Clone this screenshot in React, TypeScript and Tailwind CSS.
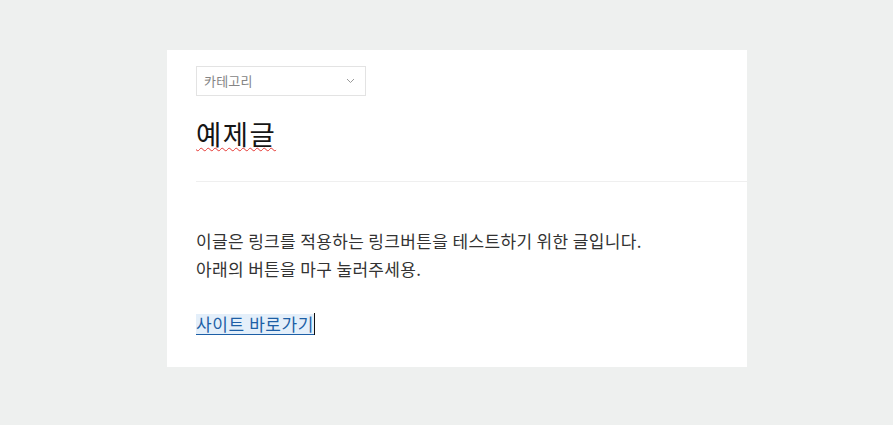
export default function App() {
  return (
    <div
      className="min-h-[425px] w-full bg-[#eef0ef] pt-[50px]"
      style={{ fontFamily: '"Noto Sans CJK KR", "Noto Sans", sans-serif' }}
    >
      <div className="ml-[167px] w-[580px] bg-white pb-[32px] pl-[29px]">
        <div className="pt-[16px]">
          <div className="flex h-[30px] w-[170px] items-center justify-between border border-[#e3e3e3] pl-[7px] pr-[10px] text-[13px] tracking-[0.2px] text-[#858585]">
            <span>카테고리</span>
            <svg width="9" height="6" viewBox="0 0 9 6" fill="none">
              <polyline points="1,1 4.5,4.5 8,1" stroke="#9a9a9a" strokeWidth="1" />
            </svg>
          </div>
        </div>

        <div className="border-b border-[#efefef] pb-[28px] pt-[17px]">
          <h1 className="text-[27.5px] leading-[40px] tracking-[1.4px] text-[#151515]">
            <span className="underline decoration-wavy decoration-[#e53935] decoration-1 underline-offset-[2px]">예제글</span>
          </h1>
        </div>

        <div className="pt-[45px] text-[17px] leading-[28px] tracking-[0.35px] text-[#333]">
          <p>이글은 링크를 적용하는 링크버튼을 테스트하기 위한 글입니다.</p>
          <p>아래의 버튼을 마구 눌러주세용.</p>
          <p>
            <br />
          </p>
          <p className="flex items-center pt-[2px]">
            <a className="inline-block h-[21px] bg-[#e4effa] leading-[20px] tracking-[0.6px] text-[#1d5fa6] underline decoration-[#1d5fa6] underline-offset-[3px]">
              사이트 바로가기
            </a>
            <span className="inline-block h-[22px] w-px bg-[#111]" />
          </p>
        </div>
      </div>
    </div>
  );
}
